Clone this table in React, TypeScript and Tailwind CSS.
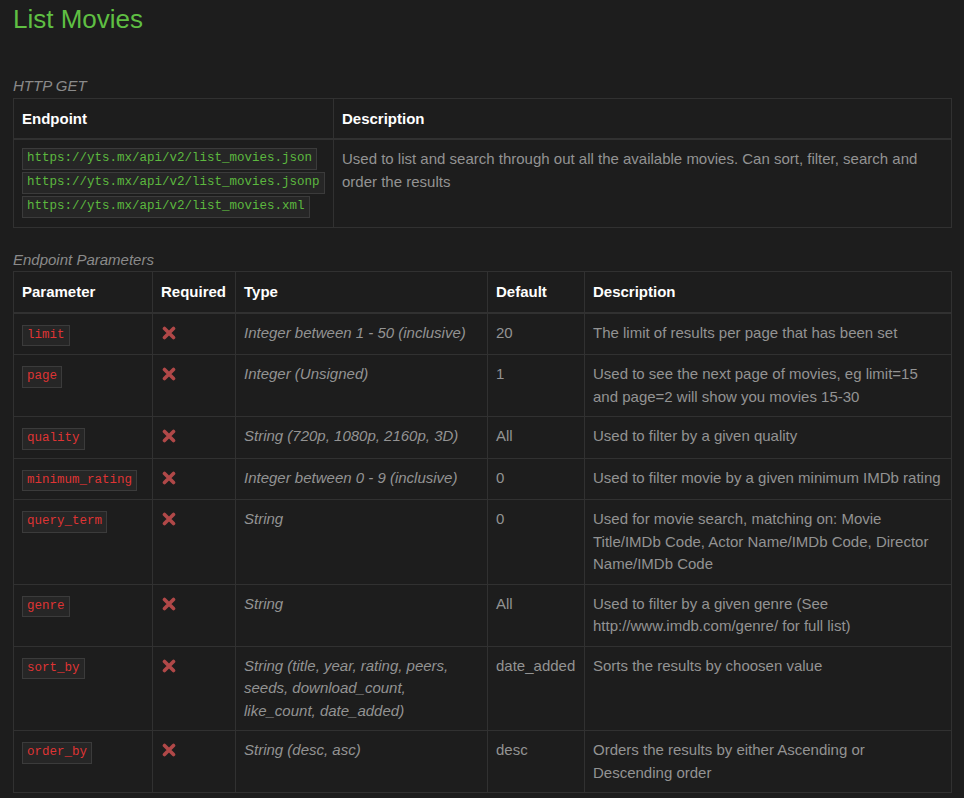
const sans = { fontFamily: '"Liberation Sans", Arial, sans-serif' }

type Param = {
  name: string
  type: string
  def: string
  desc: string
}

const params: Param[] = [
  { name: "limit", type: "Integer between 1 - 50 (inclusive)", def: "20", desc: "The limit of results per page that has been set" },
  { name: "page", type: "Integer (Unsigned)", def: "1", desc: "Used to see the next page of movies, eg limit=15 and page=2 will show you movies 15-30" },
  { name: "quality", type: "String (720p, 1080p, 2160p, 3D)", def: "All", desc: "Used to filter by a given quality" },
  { name: "minimum_rating", type: "Integer between 0 - 9 (inclusive)", def: "0", desc: "Used to filter movie by a given minimum IMDb rating" },
  { name: "query_term", type: "String", def: "0", desc: "Used for movie search, matching on: Movie Title/IMDb Code, Actor Name/IMDb Code, Director Name/IMDb Code" },
  { name: "genre", type: "String", def: "All", desc: "Used to filter by a given genre (See http://www.imdb.com/genre/ for full list)" },
  { name: "sort_by", type: "String (title, year, rating, peers, seeds, download_count, like_count, date_added)", def: "date_added", desc: "Sorts the results by choosen value" },
  { name: "order_by", type: "String (desc, asc)", def: "desc", desc: "Orders the results by either Ascending or Descending order" },
]

const Code = ({ children, color }: { children: string; color: string }) => (
  <code
    className={`inline-block border border-[#3b3b3b] bg-[#262626] px-[4px] text-[12.5px] leading-[19.5px] ${color}`}
    style={{ fontFamily: '"Liberation Mono", "Courier New", monospace' }}
  >
    {children}
  </code>
)

const Cross = () => (
  <svg width="14" height="14" viewBox="0 0 14 14" className="mt-[4px] ml-[1px]">
    <path d="M2.5 2.5 L11.5 11.5 M11.5 2.5 L2.5 11.5" stroke="#b04848" strokeWidth="3.6" strokeLinecap="round" />
  </svg>
)

const th = "border border-b-2 border-[#313131] px-[8px] pt-[9px] pb-[8px] text-left align-top font-bold text-white"
const td = "border border-[#313131] px-[8px] py-[8px] align-top"

export default function App() {
  return (
    <div className="min-h-screen bg-[#1d1d1d] px-[13px] text-[15px] leading-[22.5px] text-[#939393]" style={sans}>
      <h1 className="text-[26px] leading-[39px] text-[#5fbf43]">List Movies</h1>

      <div className="mt-[36px] italic text-[#8a8a8a]">HTTP GET</div>
      <table className="w-[939px] table-fixed border-collapse">
        <colgroup>
          <col className="w-[320px]" />
          <col />
        </colgroup>
        <thead>
          <tr>
            <th className={th}>Endpoint</th>
            <th className={th}>Description</th>
          </tr>
        </thead>
        <tbody>
          <tr>
            <td className={td}>
              <div className="flex flex-col items-start gap-[2.5px] pb-[1px]">
                <Code color="text-[#5cb83f]">https://yts.mx/api/v2/list_movies.json</Code>
                <Code color="text-[#5cb83f]">https://yts.mx/api/v2/list_movies.jsonp</Code>
                <Code color="text-[#5cb83f]">https://yts.mx/api/v2/list_movies.xml</Code>
              </div>
            </td>
            <td className={td}>
              Used to list and search through out all the available movies. Can sort, filter, search and order the results
            </td>
          </tr>
        </tbody>
      </table>

      <div className="mt-[21px] italic text-[#8a8a8a]">Endpoint Parameters</div>
      <table className="w-[939px] table-fixed border-collapse">
        <colgroup>
          <col className="w-[139px]" />
          <col className="w-[83px]" />
          <col className="w-[252px]" />
          <col className="w-[97px]" />
          <col />
        </colgroup>
        <thead>
          <tr>
            <th className={th}>Parameter</th>
            <th className={th}>Required</th>
            <th className={th}>Type</th>
            <th className={th}>Default</th>
            <th className={th}>Description</th>
          </tr>
        </thead>
        <tbody>
          {params.map((p) => (
            <tr key={p.name}>
              <td className={td}>
                <div className="min-h-[24.5px]">
                  <Code color="text-[#df3434]">{p.name}</Code>
                </div>
              </td>
              <td className={td}>
                <Cross />
              </td>
              <td className={`${td} italic`}>{p.type}</td>
              <td className={td}>{p.def}</td>
              <td className={td}>{p.desc}</td>
            </tr>
          ))}
        </tbody>
      </table>
    </div>
  )
}
